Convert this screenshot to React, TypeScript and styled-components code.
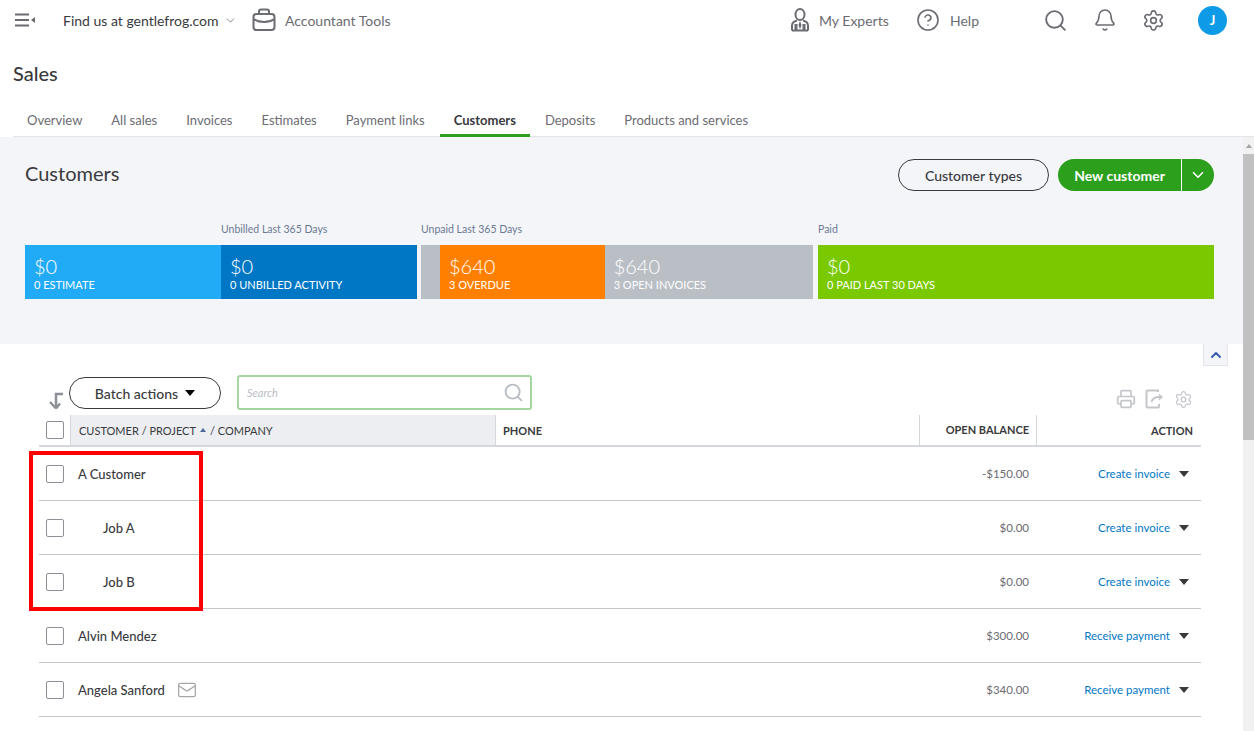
import React from 'react';
import styled, { createGlobalStyle } from 'styled-components';
import { Bell, ChevronDown, ChevronUp, CircleHelp, Mail, Printer, Search, Settings } from 'lucide-react';

const GlobalStyle = createGlobalStyle`
  html, body {
    margin: 0;
    padding: 0;
    background: #fff;
    overflow: hidden;
  }
  * {
    box-sizing: border-box;
  }
  body {
    font-family: Lato, "Open Sans", "Liberation Sans", sans-serif;
    color: #393a3d;
  }
`;

const tabs = ['Overview', 'All sales', 'Invoices', 'Estimates', 'Payment links', 'Customers', 'Deposits', 'Products and services'];

const rows = [
  { name: 'A Customer', balance: '-$150.00', action: 'Create invoice' },
  { name: 'Job A', balance: '$0.00', action: 'Create invoice', sub: true },
  { name: 'Job B', balance: '$0.00', action: 'Create invoice', sub: true },
  { name: 'Alvin Mendez', balance: '$300.00', action: 'Receive payment' },
  { name: 'Angela Sanford', balance: '$340.00', action: 'Receive payment', mail: true },
];

const MenuIcon = () => (
  <svg width="21" height="14" viewBox="0 0 21 14" fill="none">
    <path d="M0 1.5h14M0 7h14M0 12.5h14" stroke="#6b6c72" strokeWidth="2" />
    <path d="M20 4v6l-4-3z" fill="#6b6c72" />
  </svg>
);

const BriefcaseIcon = () => (
  <svg width="24" height="24" viewBox="0 0 24 24" fill="none" stroke="#6b6c72" strokeWidth="2">
    <rect x="1.5" y="6" width="21" height="16" rx="3" />
    <path d="M7 6V3.5C7 2.4 7.9 1.5 9 1.5h6c1.100 0 2 .9 2 2V6" />
    <path d="M1.500 11c3 2 6 3 10.500 3s7.500-1 10.500-3" />
  </svg>
);

const ExpertIcon = () => (
  <svg width="18" height="24" viewBox="0 0 18 24" fill="none" stroke="#6b6c72" strokeWidth="2">
    <ellipse cx="9" cy="6.500" rx="4.500" ry="5.500" />
    <path d="M1 22.500v-5c0-3 3-4.500 5-5M17 22.500v-5c0-3-3-4.500-5-5" />
    <path d="M1 22.500h16" />
    <path d="M9 13l-1.500 4L9 21.500l1.500-4.500z" fill="#6b6c72" stroke="none" />
    <path d="M5 16v6M13 16v6" strokeWidth="3" />
  </svg>
);

const ExportIcon = () => (
  <svg width="20" height="20" viewBox="0 0 20 20" fill="none" stroke="#c4c6ca" strokeWidth="2">
    <path d="M13 3V1.500H2.500C1.900 1.500 1.500 1.900 1.500 2.500v15c0 .6.4 1 1 1H13c.6 0 1-.4 1-1V15" />
    <path d="M6.500 13c.8-3.500 3.500-5 8-5" />
    <path d="M14 4.500L18 8l-4 3.500z" fill="#c4c6ca" stroke="none" />
  </svg>
);

const SortArrowIcon = () => (
  <svg width="16" height="18" viewBox="0 0 16 18" fill="none" stroke="#8d9096" strokeWidth="2.500">
    <path d="M15 2H8v14" />
    <path d="M2 10l6 6.500" />
    <path d="M8 16.500l4-5" />
  </svg>
);

export default function App() {
  return (
    <Page>
      <GlobalStyle />
      <TopBar>
        <TopLeft>
          <MenuButton>
            <MenuIcon />
          </MenuButton>
          <CompanyName>
            Find us at gentlefrog.com
            <ChevronDown size={13} color="#6b6c72" strokeWidth={1.5} />
          </CompanyName>
          <ToolsLink>
            <BriefcaseIcon />
            Accountant Tools
          </ToolsLink>
        </TopLeft>
        <TopRight>
          <TopLink $width={97}>
            <ExpertIcon />
            My Experts
          </TopLink>
          <TopLink $width={87}>
            <CircleHelp size={24} color="#6b6c72" strokeWidth={1.6} />
            Help
          </TopLink>
          <TopIcon>
            <Search size={25} color="#6b6c72" strokeWidth={1.8} />
          </TopIcon>
          <TopIcon>
            <Bell size={24} color="#6b6c72" strokeWidth={1.6} />
          </TopIcon>
          <TopIcon>
            <Settings size={23} color="#6b6c72" strokeWidth={1.7} />
          </TopIcon>
          <Avatar>J</Avatar>
        </TopRight>
      </TopBar>

      <PageTitle>Sales</PageTitle>

      <TabBar>
        {tabs.map((tab) => (
          <Tab key={tab} $active={tab === 'Customers'}>
            {tab}
          </Tab>
        ))}
      </TabBar>

      <Body>
        <Main>
          <Panel>
            <PanelHeader>
              <PanelTitle>Customers</PanelTitle>
              <PanelButtons>
                <OutlineButton>Customer types</OutlineButton>
                <GreenButton>
                  <GreenLabel>New customer</GreenLabel>
                  <GreenCaret>
                    <ChevronDown size={18} color="#fff" strokeWidth={2.2} />
                  </GreenCaret>
                </GreenButton>
              </PanelButtons>
            </PanelHeader>
            <MoneyBar>
              <MoneyGroup $width={392}>
                <GroupLabel>
                  <span />
                  <span>Unbilled Last 365 Days</span>
                </GroupLabel>
                <Segments>
                  <Segment $color="#21abf6" $width={196}>
                    <Amount>$0</Amount>
                    <Caption>0 ESTIMATE</Caption>
                  </Segment>
                  <Segment $color="#0077c5" $width={196}>
                    <Amount>$0</Amount>
                    <Caption>0 UNBILLED ACTIVITY</Caption>
                  </Segment>
                </Segments>
              </MoneyGroup>
              <MoneyGroup $width={392}>
                <UnpaidLabel>Unpaid Last 365 Days</UnpaidLabel>
                <Segments>
                  <Segment $color="#babec5" $width={9} />
                  <Segment $color="#ff8000" $width={169}>
                    <Amount>$640</Amount>
                    <Caption>3 OVERDUE</Caption>
                  </Segment>
                  <Segment $color="#babec5" $width={214}>
                    <Amount>$640</Amount>
                    <Caption>3 OPEN INVOICES</Caption>
                  </Segment>
                </Segments>
              </MoneyGroup>
              <MoneyGroup $width={396}>
                <UnpaidLabel>Paid</UnpaidLabel>
                <Segments>
                  <Segment $color="#7ac900" $width={396}>
                    <Amount>$0</Amount>
                    <Caption>0 PAID LAST 30 DAYS</Caption>
                  </Segment>
                </Segments>
              </MoneyGroup>
            </MoneyBar>
          </Panel>

          <CollapseButton>
            <ChevronUp size={16} color="#3b5bab" strokeWidth={3} />
          </CollapseButton>

          <TableArea>
            <Toolbar>
              <ToolbarLeft>
                <SortArrow>
                  <SortArrowIcon />
                </SortArrow>
                <BatchButton>
                  Batch actions
                  <Caret $color="#000" />
                </BatchButton>
                <SearchBox>
                  <SearchText>Search</SearchText>
                  <Search size={21} color="#babec5" strokeWidth={2.2} />
                </SearchBox>
              </ToolbarLeft>
              <ToolbarIcons>
                <Printer size={20} color="#c4c6ca" strokeWidth={2} />
                <ExportIcon />
                <Settings size={19} color="#c4c6ca" strokeWidth={1.6} />
              </ToolbarIcons>
            </Toolbar>

            <HeaderRow>
              <CheckCell>
                <CheckBox />
              </CheckCell>
              <SortedHead>
                CUSTOMER / PROJECT <SortTriangle /> / COMPANY
              </SortedHead>
              <HeadCell>PHONE</HeadCell>
              <HeadCell $right>OPEN BALANCE</HeadCell>
              <ActionHead>ACTION</ActionHead>
            </HeaderRow>

            {rows.map((row) => (
              <Row key={row.name}>
                <CheckCell>
                  <CheckBox />
                </CheckCell>
                <NameCell $sub={row.sub}>
                  {row.name}
                  {row.mail && <Mail size={20} color="#a4a6aa" strokeWidth={1.5} />}
                </NameCell>
                <div />
                <BalanceCell>{row.balance}</BalanceCell>
                <ActionCell>
                  <ActionLink>{row.action}</ActionLink>
                  <Caret $color="#393a3d" />
                </ActionCell>
              </Row>
            ))}
          </TableArea>
          <RedBox />
        </Main>

        <ScrollTrack>
          <ScrollUp />
          <ScrollThumb />
        </ScrollTrack>
      </Body>
    </Page>
  );
}

const Page = styled.div`
  width: 1254px;
  height: 731px;
  overflow: hidden;
  display: flex;
  flex-direction: column;
`;

const TopBar = styled.div`
  height: 40px;
  flex: none;
  display: flex;
  justify-content: space-between;
  align-items: center;
  padding: 0 27px 0 15px;
`;

const TopLeft = styled.div`
  display: flex;
  align-items: center;
`;

const MenuButton = styled.div`
  display: flex;
  width: 48px;
`;

const CompanyName = styled.div`
  display: flex;
  align-items: center;
  gap: 5px;
  width: 189px;
  font-size: 14px;
  color: #393a3d;
`;

const ToolsLink = styled.div`
  display: flex;
  align-items: center;
  gap: 9px;
  font-size: 14px;
  color: #6b6c72;
`;

const TopRight = styled.div`
  display: flex;
  align-items: center;
`;

const TopLink = styled.div<{ $width: number }>`
  display: flex;
  align-items: center;
  gap: 10px;
  width: ${(p) => p.$width + 28}px;
  font-size: 14px;
  color: #6b6c72;
`;

const TopIcon = styled.div`
  display: flex;
  justify-content: center;
  width: 49px;
`;

const Avatar = styled.div`
  width: 29px;
  height: 29px;
  margin-left: 20px;
  border-radius: 50%;
  background: #0d9ae6;
  color: #fff;
  font-size: 13px;
  font-weight: 700;
  display: flex;
  align-items: center;
  justify-content: center;
`;

const PageTitle = styled.h1`
  margin: 0;
  padding: 19px 13px 0;
  height: 65px;
  flex: none;
  font-size: 20px;
  line-height: 28px;
  font-weight: 500;
  color: #393a3d;
`;

const TabBar = styled.div`
  height: 32px;
  flex: none;
  display: flex;
  gap: 1px;
  margin-left: 13px;
  border-bottom: 1px solid #e3e5e8;
`;

const Tab = styled.div<{ $active?: boolean }>`
  height: 32px;
  padding: 7px 14px 0;
  font-size: 13px;
  line-height: 16px;
  white-space: nowrap;
  color: ${(p) => (p.$active ? '#393a3d' : '#6b6c72')};
  font-weight: ${(p) => (p.$active ? 700 : 400)};
  border-bottom: ${(p) => (p.$active ? '3px solid #2ca01c' : 'none')};
`;

const Body = styled.div`
  flex: 1;
  display: flex;
  min-height: 0;
`;

const Main = styled.div`
  position: relative;
  flex: 1;
  min-width: 0;
`;

const Panel = styled.div`
  height: 207px;
  padding: 0 29px 0 25px;
  background: #f4f5f8;
`;

const PanelHeader = styled.div`
  height: 84px;
  display: flex;
  justify-content: space-between;
  padding-top: 22px;
`;

const PanelTitle = styled.h2`
  margin: 0;
  font-size: 20px;
  line-height: 28px;
  font-weight: 400;
  color: #393a3d;
`;

const PanelButtons = styled.div`
  display: flex;
  gap: 9px;
  align-items: flex-start;
`;

const OutlineButton = styled.div`
  width: 151px;
  height: 32px;
  border: 1px solid #393a3d;
  border-radius: 16px;
  display: flex;
  align-items: center;
  justify-content: center;
  font-size: 14px;
  font-weight: 500;
  color: #393a3d;
  background: transparent;
`;

const GreenButton = styled.div`
  width: 156px;
  height: 32px;
  border-radius: 16px;
  background: #2ca01c;
  color: #fff;
  display: flex;
`;

const GreenLabel = styled.div`
  width: 124px;
  display: flex;
  align-items: center;
  justify-content: center;
  font-size: 14px;
  font-weight: 700;
  border-right: 1px solid #fff;
`;

const GreenCaret = styled.div`
  flex: 1;
  display: flex;
  align-items: center;
  justify-content: center;
`;

const MoneyBar = styled.div`
  display: flex;
  gap: 4px;
`;

const MoneyGroup = styled.div<{ $width: number }>`
  width: ${(p) => p.$width}px;
  flex: none;
  & + & + & {
    margin-left: 1px;
  }
`;

const GroupLabel = styled.div`
  height: 24px;
  display: grid;
  grid-template-columns: 196px 196px;
  font-size: 10.5px;
  line-height: 16px;
  color: #6b7a94;
`;

const UnpaidLabel = styled.div`
  height: 24px;
  font-size: 10.5px;
  line-height: 16px;
  color: #6b7a94;
`;

const Segments = styled.div`
  display: flex;
  height: 54px;
`;

const Segment = styled.div<{ $color: string; $width: number }>`
  width: ${(p) => p.$width}px;
  background: ${(p) => p.$color};
  color: #fff;
  padding: 9px 10px 0 9px;
  overflow: hidden;
`;

const Amount = styled.div`
  font-size: 20px;
  line-height: 24px;
  font-weight: 300;
`;

const Caption = styled.div`
  font-size: 11px;
  line-height: 13px;
  white-space: nowrap;
`;

const CollapseButton = styled.div`
  position: absolute;
  top: 207px;
  left: 1203px;
  width: 25px;
  height: 22px;
  display: flex;
  align-items: center;
  justify-content: center;
  background: #f4f5f8;
  border: 1px solid #e3e5e8;
  border-top: none;
`;

const TableArea = styled.div`
  padding: 31px 42px 0 39px;
`;

const Toolbar = styled.div`
  height: 40px;
  display: flex;
  justify-content: space-between;
  align-items: flex-start;
`;

const ToolbarLeft = styled.div`
  display: flex;
  align-items: flex-start;
`;

const SortArrow = styled.div`
  width: 30px;
  padding: 17px 0 0 9px;
  display: flex;
`;

const BatchButton = styled.div`
  width: 152px;
  height: 32px;
  margin-top: 2px;
  border: 1px solid #393a3d;
  border-radius: 16px;
  display: flex;
  align-items: center;
  justify-content: center;
  gap: 7px;
  font-size: 14px;
  font-weight: 500;
`;

const Caret = styled.span<{ $color: string }>`
  width: 0;
  height: 0;
  border-left: 5px solid transparent;
  border-right: 5px solid transparent;
  border-top: 6px solid ${(p) => p.$color};
`;

const SearchBox = styled.div`
  width: 295px;
  height: 35px;
  margin-left: 16px;
  border: 2.500px solid #a5d5a0;
  border-radius: 3px;
  background: #fff;
  display: flex;
  align-items: center;
  justify-content: space-between;
  padding: 0 6px 0 8px;
`;

const SearchText = styled.span`
  font-size: 11px;
  font-style: italic;
  color: #babec5;
`;

const ToolbarIcons = styled.div`
  display: flex;
  align-items: center;
  gap: 9px;
  padding: 14px 8px 0 0;
`;

const HeaderRow = styled.div`
  height: 32px;
  display: grid;
  grid-template-columns: 31px 426px 424px 117px 164px;
  border-bottom: 2px solid #d4d7dc;
`;

const CheckCell = styled.div`
  display: flex;
  align-items: center;
  padding-left: 7px;
`;

const CheckBox = styled.div`
  width: 18px;
  height: 18px;
  border: 1px solid #8d9096;
  border-radius: 2px;
  background: #fff;
`;

const SortedHead = styled.div`
  display: flex;
  align-items: center;
  gap: 4px;
  padding-left: 8px;
  background: #eceef1;
  border-left: 1px solid #d4d7dc;
  border-right: 1px solid #d4d7dc;
  font-size: 11px;
  color: #393a3d;
  white-space: nowrap;
`;

const SortTriangle = styled.span`
  width: 0;
  height: 0;
  border-left: 3.500px solid transparent;
  border-right: 3.500px solid transparent;
  border-bottom: 4px solid #4a6a94;
`;

const HeadCell = styled.div<{ $right?: boolean }>`
  display: flex;
  align-items: center;
  justify-content: ${(p) => (p.$right ? 'flex-end' : 'flex-start')};
  padding: 0 7px;
  font-size: 11px;
  font-weight: 700;
  white-space: nowrap;
  border-right: 1px solid #d4d7dc;
  ${(p) => p.$right && 'padding-bottom: 2px;'}
`;

const ActionHead = styled.div`
  display: flex;
  align-items: center;
  justify-content: flex-end;
  padding: 0 8px;
  font-size: 11px;
  font-weight: 700;
`;

const Row = styled.div`
  height: 54px;
  display: grid;
  grid-template-columns: 31px 426px 424px 117px 164px;
  border-bottom: 1px solid #c4c6ca;
`;

const NameCell = styled.div<{ $sub?: boolean }>`
  display: flex;
  align-items: center;
  gap: 12px;
  padding-left: ${(p) => (p.$sub ? '33px' : '8px')};
  font-size: 13px;
  font-weight: 500;
  color: #393a3d;
`;

const BalanceCell = styled.div`
  display: flex;
  align-items: center;
  justify-content: flex-end;
  padding-right: 8px;
  font-size: 11.5px;
  color: #6b6c72;
`;

const ActionCell = styled.div`
  display: flex;
  align-items: center;
  justify-content: flex-end;
  gap: 9px;
  padding-right: 12px;
`;

const ActionLink = styled.span`
  font-size: 11.5px;
  color: #0077c5;
`;

const RedBox = styled.div`
  position: absolute;
  top: 314px;
  left: 29px;
  width: 174px;
  height: 160px;
  border: 4px solid #ff0000;
  pointer-events: none;
`;

const ScrollTrack = styled.div`
  width: 11px;
  flex: none;
  background: #f1f1f1;
  display: flex;
  flex-direction: column;
`;

const ScrollUp = styled.div`
  height: 17px;
  display: flex;
  align-items: center;
  justify-content: center;
  &::before {
    content: '';
    border-left: 3.500px solid transparent;
    border-right: 3.500px solid transparent;
    border-bottom: 4px solid #a3a3a3;
  }
`;

const ScrollThumb = styled.div`
  height: 286px;
  background: #c1c1c1;
`;
